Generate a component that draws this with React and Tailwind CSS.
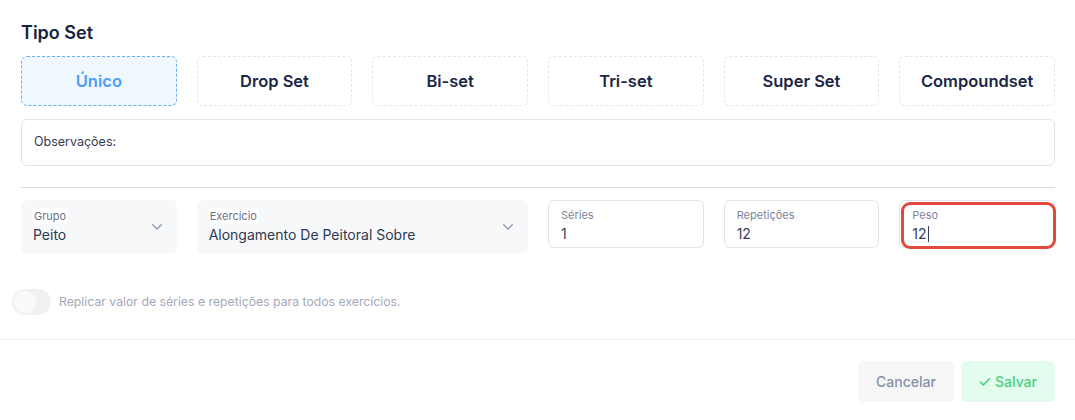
import React from "react";

const types = ["Único", "Drop Set", "Bi-set", "Tri-set", "Super Set", "Compoundset"];

function Chevron() {
  return (
    <svg width="12" height="8" viewBox="0 0 12 8" fill="none" className="shrink-0">
      <path d="M1.75 1.75 6 6l4.25-4.25" stroke="#8a91a8" strokeWidth="1.2" strokeLinecap="round" strokeLinejoin="round" />
    </svg>
  );
}

function SelectField({ label, value, className = "" }) {
  return (
    <div className={`h-[54px] rounded-md bg-[#f7f8fa] flex items-center justify-between pl-3 pr-[14px] ${className}`}>
      <div className="flex flex-col items-start">
        <span className="bg-white rounded px-[2px] -ml-[1px] text-[11px] leading-[16px] text-[#6b7287]">{label}</span>
        <span className="text-[14px] leading-[22px] text-[#2f3852]">{value}</span>
      </div>
      <Chevron />
    </div>
  );
}

function InputField({ label, value, caret = false }) {
  return (
    <div className="h-[48px] rounded-md border border-[#dfe3ec] bg-white flex flex-col justify-start pt-[7px] pl-3">
      <span className="text-[11px] leading-[14px] text-[#7d849a]">{label}</span>
      <span className="text-[14px] leading-[20px] text-[#38425d] mt-[2px] flex items-center">
        {value}
        {caret && <span className="inline-block w-px h-[16px] bg-[#38425d] ml-[1px]" />}
      </span>
    </div>
  );
}

export default function App() {
  return (
    <div className="w-[1075px] h-[420px] bg-white overflow-hidden" style={{ fontFamily: "Inter, 'Noto Sans', sans-serif" }}>
      <div className="pl-[21px] pr-[20px]">
        <h2 className="pt-[21px] text-[18px] leading-[24px] font-semibold text-[#172243]">Tipo Set</h2>
        <div className="grid grid-cols-6 gap-x-5 mt-[11px]">
          {types.map((t, i) => (
            <div
              key={t}
              className={
                i === 0
                  ? "h-[50px] rounded-md border border-dashed border-[#6aaef5] bg-[#eff8ff] flex items-center justify-center text-[16.5px] font-semibold text-[#4d9ff3]"
                  : "h-[50px] rounded-md border border-dashed border-[#e3e6ee] bg-white flex items-center justify-center text-[16.5px] font-semibold text-[#1c2645]"
              }
            >
              {t}
            </div>
          ))}
        </div>
        <div className="mt-[13px] h-[47px] rounded-md border border-[#dfe3ec] flex items-center px-3 text-[12.5px] text-[#333b4f]">
          Observações:
        </div>
        <div className="mt-[21px] h-px bg-[#d9dde7]" />
        <div className="grid grid-cols-6 gap-x-5 items-start mt-[12px]">
          <SelectField label="Grupo" value="Peito" />
          <SelectField label="Exercício" value="Alongamento De Peitoral Sobre" className="col-span-2" />
          <InputField label="Séries" value="1" />
          <InputField label="Repetições" value="12" />
          <div className="relative">
            <InputField label="Peso" value="12" caret />
            <div className="absolute left-[2px] top-[2px] -right-[1px] -bottom-[1px] rounded-[9px] border-[3px] border-[#e14a3b] pointer-events-none" />
          </div>
        </div>
      </div>
      <div className="flex items-center gap-[8px] pl-[12px] mt-[35px]">
        <div className="w-[39px] h-[26px] rounded-full bg-[#f1f1f2] flex items-center pl-[2px]">
          <div className="w-[22px] h-[22px] rounded-full bg-[#fafafa]" />
        </div>
        <span className="text-[12.25px] text-[#a3a9ba]">Replicar valor de séries e repetições para todos exercícios.</span>
      </div>
      <div className="mt-[24px] h-px bg-[#efeff1]" />
      <div className="flex justify-end gap-[7px] pr-[20px] mt-[21px]">
        <button className="w-[96px] h-[41px] rounded-md bg-[#f6f6f7] text-[14px] font-medium text-[#8890a8]">Cancelar</button>
        <button className="w-[94px] h-[41px] rounded-md bg-[#e4fcee] text-[14px] font-medium text-[#49d17f] flex items-center justify-center gap-[4px]">
          <svg width="12" height="10" viewBox="0 0 12 10" fill="none">
            <path d="M1.5 5.2 4.4 8 10.5 1.8" stroke="#49d17f" strokeWidth="1.6" strokeLinecap="round" strokeLinejoin="round" />
          </svg>
          Salvar
        </button>
      </div>
    </div>
  );
}
